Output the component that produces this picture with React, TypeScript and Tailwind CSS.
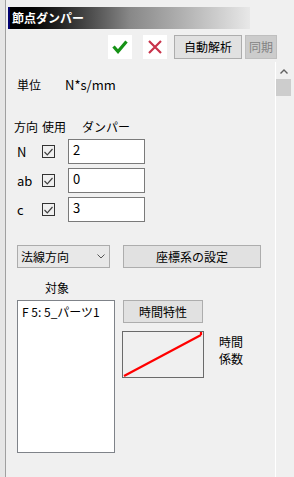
import React from "react"

const font = "font-['Noto_Sans_CJK_JP',sans-serif]"

const CheckMark = () => (
  <svg width="16" height="14" viewBox="0 0 16 14">
    <path d="M1.5 6.5 L6 11.5 L14.5 1.5" stroke="#169216" strokeWidth="3.2" fill="none" strokeLinejoin="miter" />
  </svg>
)

const CrossMark = () => (
  <svg width="14" height="14" viewBox="0 0 14 14">
    <path d="M1 1 L13 13 M13 1 L1 13" stroke="#c8334a" strokeWidth="2.2" fill="none" />
  </svg>
)

const Tick = () => (
  <svg width="9" height="8" viewBox="0 0 9 8">
    <path d="M0.5 4 L3.3 6.8 L8.5 1" stroke="#404040" strokeWidth="1.2" fill="none" />
  </svg>
)

const rows = [
  { dir: "N", value: "2" },
  { dir: "ab", value: "0" },
  { dir: "c", value: "3" },
]

export default function App() {
  return (
    <div className={`${font} w-[294px] h-[477px] flex bg-[#f0f0f0] text-[12px] text-black overflow-hidden`}>
      <div className="w-[5px] bg-[#e6e6e6]" />
      <div className="w-px bg-[#a0a0a0]" />
      <div className="flex-1 flex flex-col">
        <div className="mt-[7px] ml-[2px] w-[242px] h-[22px] border-l-2 border-[#000070] bg-gradient-to-r from-black via-[#888888] to-[#e8e8e8] flex items-center pl-[2px]">
          <span className="text-white font-bold text-[12px] leading-none">節点ダンパー</span>
        </div>

        <div className="mt-[6px] h-6 flex pl-[102px]">
          <div className="w-6 h-6 bg-white flex items-center justify-center">
            <CheckMark />
          </div>
          <div className="ml-[11px] w-6 h-6 bg-white flex items-center justify-center">
            <CrossMark />
          </div>
          <button className="ml-[7px] w-[68px] h-6 bg-[#e1e1e1] border border-[#adadad] flex items-center justify-center text-[12px]">
            自動解析
          </button>
          <button className="ml-[3px] w-[32px] h-6 bg-[#cccccc] border border-[#bfbfbf] flex items-center justify-center text-[12px] text-[#838383]">
            同期
          </button>
        </div>

        <div className="mt-[3px] flex-1 flex">
          <div className="flex-1 flex flex-col">
            <div className="mt-[15px] h-4 flex items-center">
              <span className="ml-[11px] w-[48px]">単位</span>
              <span className="text-[13px]">N*s/mm</span>
            </div>

            <div className="mt-[26px] h-4 flex items-center">
              <span className="ml-[8px] w-[28px]">方向</span>
              <span className="w-[40px]">使用</span>
              <span>ダンパー</span>
            </div>

            <div className="mt-[4px] flex flex-col gap-[4px]">
              {rows.map((r) => (
                <div key={r.dir} className="h-[25px] flex items-center">
                  <span className="ml-[11px] w-[25px] text-[13px]">{r.dir}</span>
                  <span className="w-[13px] h-[13px] border border-[#333333] bg-transparent flex items-center justify-center">
                    <Tick />
                  </span>
                  <div className="ml-[13px] w-[77px] h-[25px] bg-white border border-[#7a7a7a] pl-[4px] pt-px text-[13px] leading-[18px]">
                    {r.value}
                  </div>
                </div>
              ))}
            </div>

            <div className="mt-[23px] h-[23px] flex">
              <div className="ml-[11px] w-[93px] h-[23px] bg-[#e8e8e8] border border-[#acacac] flex items-center justify-between pl-[3px] pr-[4px]">
                <span>法線方向</span>
                <svg width="8" height="5" viewBox="0 0 8 5">
                  <path d="M0.5 0.5 L4 4 L7.5 0.5" stroke="#555555" strokeWidth="1" fill="none" />
                </svg>
              </div>
              <button className="ml-[13px] w-[138px] h-[23px] bg-[#e1e1e1] border border-[#adadad] flex items-center justify-center">
                座標系の設定
              </button>
            </div>

            <div className="mt-[12px] h-4 flex items-center">
              <span className="ml-[39px]">対象</span>
            </div>

            <div className="mt-[4px] flex">
              <div className="ml-[11px] w-[98px] h-[153px] bg-white border border-[#7f8389] pl-[4px] pt-[2px]">
                <span className="text-[12px] leading-[16px]">F 5: 5_パーツ1</span>
              </div>
              <div className="ml-[7px] flex flex-col">
                <button className="ml-px w-[80px] h-[23px] bg-[#e1e1e1] border border-[#adadad] flex items-center justify-center">
                  時間特性
                </button>
                <div className="mt-[8px] flex">
                  <div className="w-[82px] h-[47px] border border-[#6a6a6a]">
                    <svg width="80" height="45" viewBox="0 0 80 45">
                      <path d="M1 44 L78 3 M78 3 L78 0" stroke="#ff0000" strokeWidth="2.2" fill="none" />
                    </svg>
                  </div>
                  <div className="ml-[15px] mt-[2px] flex flex-col leading-[17px]">
                    <span>時間</span>
                    <span>係数</span>
                  </div>
                </div>
              </div>
            </div>
          </div>

          <div className="w-[19px] border-l border-white flex flex-col items-start">
            <div className="mt-[6px] ml-[4px] w-[8px] h-[6px] flex items-center justify-center">
              <svg width="8" height="5" viewBox="0 0 8 5">
                <path d="M0.5 4.5 L4 1 L7.5 4.5" stroke="#606060" strokeWidth="1.4" fill="none" />
              </svg>
            </div>
            <div className="mt-[5px] w-[15px] h-[17px] bg-[#cdcdcd]" />
          </div>
        </div>
      </div>
    </div>
  )
}
